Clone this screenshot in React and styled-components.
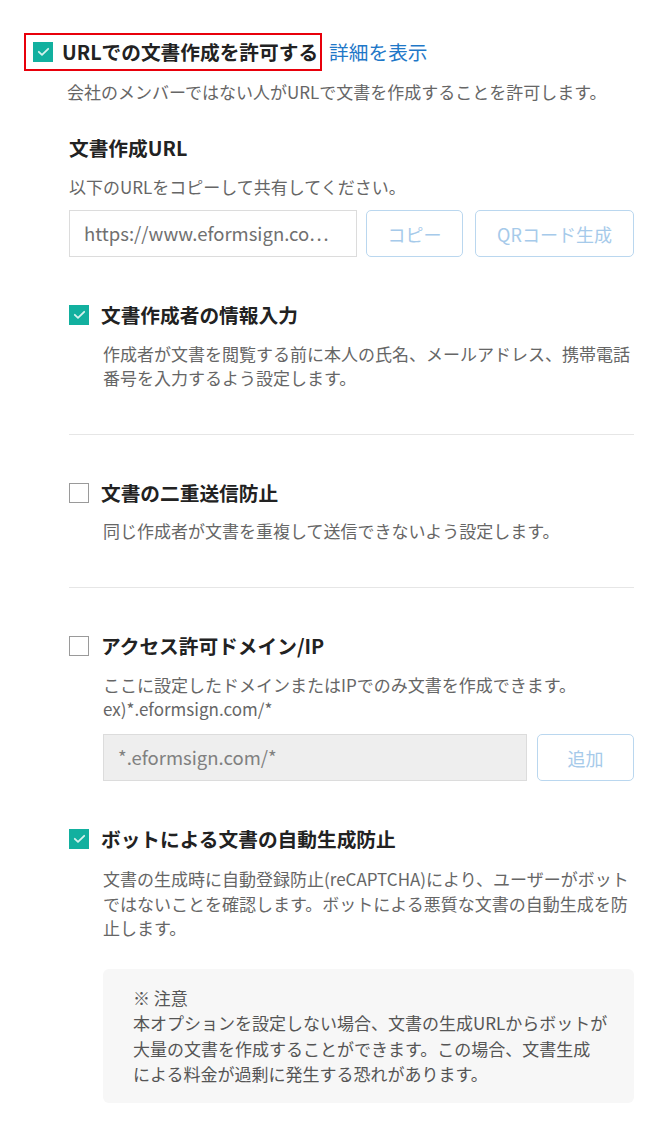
import React from "react";
import styled, { createGlobalStyle } from "styled-components";

const Global = createGlobalStyle`
  html, body { margin: 0; padding: 0; background: #fff; }
  body { font-family: "Noto Sans CJK JP", "Noto Sans", sans-serif; color: #222; }
  * { box-sizing: border-box; }
`;

const Page = styled.div`
  padding: 33px 30px 20px 24px;
  width: 664px;
`;

const HeaderRow = styled.div`
  display: flex;
  align-items: center;
  gap: 7px;
`;

const Highlight = styled.div`
  display: inline-flex;
  align-items: center;
  gap: 9px;
  height: 38px;
  padding: 0 2px 0 7px;
  border: 2px solid #e8000b;
`;

const Box = styled.span`
  flex: none;
  width: 20px;
  height: 20px;
  display: inline-flex;
  align-items: center;
  justify-content: center;
  background: ${(p) => (p.$checked ? "#12b09f" : "#fff")};
  border: 1px solid ${(p) => (p.$checked ? "#12b09f" : "#9a9a9a")};
`;

const Title = styled.span`
  font-size: 19.7px;
  font-weight: 700;
  line-height: 28px;
  color: #222;
  white-space: nowrap;
`;

const Link = styled.a`
  font-size: 19.7px;
  line-height: 28px;
  color: #1f78c8;
  text-decoration: none;
`;

const Desc = styled.p`
  margin: ${(p) => p.$mt || "13px"} 0 0;
  padding-left: ${(p) => p.$pl || "0"};
  font-size: 17px;
  line-height: ${(p) => p.$lh || "24px"};
  color: #666;
`;

const Content = styled.div`
  padding-left: 45px;
`;

const SubTitle = styled.div`
  margin-top: 30px;
  font-size: 19.7px;
  font-weight: 700;
  line-height: 28px;
  color: #222;
`;

const FieldRow = styled.div`
  display: flex;
  margin-top: ${(p) => p.$mt || "11px"};
`;

const Input = styled.div`
  flex: none;
  width: ${(p) => p.$w}px;
  height: 47px;
  line-height: 45px;
  padding: 0 6px 0 14px;
  border: 1px solid #dcdcdc;
  background: ${(p) => (p.$disabled ? "#eeeeee" : "#fff")};
  color: ${(p) => (p.$disabled ? "#808080" : "#707070")};
  font-size: 18.5px;
  white-space: nowrap;
`;

const Button = styled.div`
  flex: none;
  width: ${(p) => p.$w}px;
  margin-left: ${(p) => p.$ml}px;
  height: 47px;
  display: flex;
  align-items: center;
  justify-content: center;
  border: 1px solid #bad7ef;
  border-radius: 5px;
  color: #a6caea;
  font-size: 18px;
  background: #fff;
`;

const Option = styled.div`
  margin-top: 44px;
`;

const OptionHead = styled.div`
  display: flex;
  align-items: center;
  gap: 12px;
`;

const OptionBody = styled.div`
  padding-left: 34px;
`;

const Divider = styled.hr`
  margin: 44px 0 0;
  border: 0;
  border-top: 1px solid #e6e6e6;
`;

const Note = styled.div`
  margin: 28px 0 0 34px;
  padding: 16px 10px 16px 30px;
  background: #f7f7f7;
  border-radius: 6px;
  font-size: 17px;
  line-height: 25.5px;
  color: #555;
  white-space: nowrap;
`;

const Check = () => (
  <svg width="13" height="10" viewBox="0 0 13 10" fill="none">
    <path d="M1.8 4.8 L5 7.9 L11.2 1.8" stroke="#d6f2ee" strokeWidth="1.8" strokeLinecap="round" strokeLinejoin="round" />
  </svg>
);

const CheckBox = ({ checked }) => <Box $checked={checked}>{checked && <Check />}</Box>;

const OptionItem = ({ checked, title, children }) => (
  <Option>
    <OptionHead>
      <CheckBox checked={checked} />
      <Title>{title}</Title>
    </OptionHead>
    <OptionBody>{children}</OptionBody>
  </Option>
);

export default function App() {
  return (
    <>
      <Global />
      <Page>
        <HeaderRow>
          <Highlight>
            <CheckBox checked />
            <Title>URLでの文書作成を許可する</Title>
          </Highlight>
          <Link href="#">詳細を表示</Link>
        </HeaderRow>
        <Desc $mt="9px" $pl="43px">会社のメンバーではない人がURLで文書を作成することを許可します。</Desc>
        <Content>
          <SubTitle>文書作成URL</SubTitle>
          <Desc $mt="13px">以下のURLをコピーして共有してください。</Desc>
          <FieldRow>
            <Input $w={288}>https://www.eformsign.co…</Input>
            <Button $w={97} $ml={9}>コピー</Button>
            <Button $w={159} $ml={12}>QRコード生成</Button>
          </FieldRow>

          <OptionItem checked title="文書作成者の情報入力">
            <Desc $mt="13px">
              作成者が文書を閲覧する前に本人の氏名、メールアドレス、携帯電話番号を入力するよう設定します。
            </Desc>
          </OptionItem>
          <Divider />

          <OptionItem title="文書の二重送信防止">
            <Desc $mt="12px">同じ作成者が文書を重複して送信できないよう設定します。</Desc>
          </OptionItem>
          <Divider />

          <OptionItem title="アクセス許可ドメイン/IP">
            <Desc $mt="13px">
              ここに設定したドメインまたはIPでのみ文書を作成できます。
              <br />
              ex)*.eformsign.com/*
            </Desc>
            <FieldRow $mt="13px">
              <Input $w={424} $disabled>*.eformsign.com/*</Input>
              <Button $w={97} $ml={10}>追加</Button>
            </FieldRow>
          </OptionItem>

          <OptionItem checked title="ボットによる文書の自動生成防止">
            <Desc $mt="14px" $lh="24.5px">
              文書の生成時に自動登録防止(reCAPTCHA)により、ユーザーがボットではないことを確認します。ボットによる悪質な文書の自動生成を防止します。
            </Desc>
          </OptionItem>
          <Note>
            ※ 注意
            <br />
            本オプションを設定しない場合、文書の生成URLからボットが
            <br />
            大量の文書を作成することができます。この場合、文書生成
            <br />
            による料金が過剰に発生する恐れがあります。
          </Note>
        </Content>
      </Page>
    </>
  );
}
